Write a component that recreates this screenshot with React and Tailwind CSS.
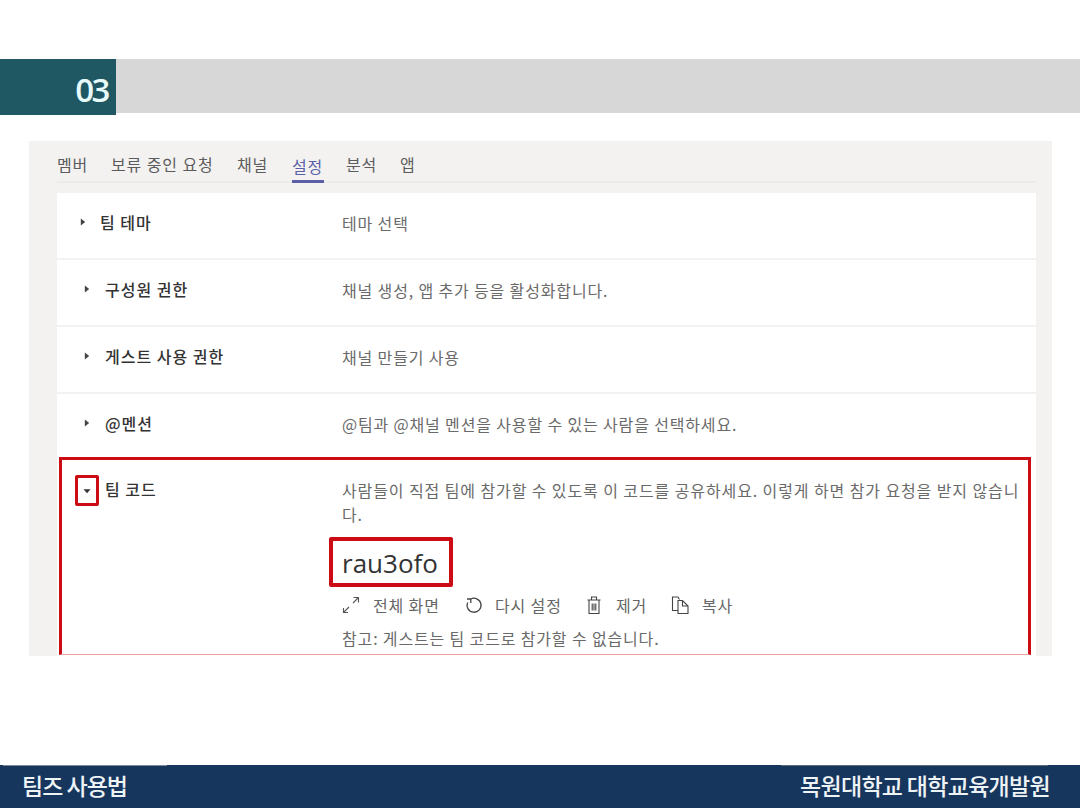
import React from "react";

function Caret({ down, className = "" }) {
  return (
    <svg width="8" height="8" viewBox="0 0 8 8" className={className}>
      {down ? <path d="M0.5 2.2h7L4 6.2z" fill="#333" /> : <path d="M1.8 0.6l4.4 3.4-4.4 3.4z" fill="#444" />}
    </svg>
  );
}

function Row({ title, desc, first }) {
  return (
    <div className="h-[65px] bg-white mb-[2px] flex items-start pt-[18px]">
      <div className={`w-[285px] flex items-center shrink-0 ${first ? "pl-[22px]" : "pl-[26px]"}`}>
        <Caret />
        <span className={`text-[16px] leading-[22px] font-medium tracking-[1px] text-[#333] ${first ? "ml-[13px]" : "ml-[14px]"}`}>{title}</span>
      </div>
      <div className="text-[16px] tracking-[0.85px] leading-[24px] text-[#6a6a6a]">{desc}</div>
    </div>
  );
}

function Expand() {
  return (
    <svg width="18" height="18" viewBox="0 0 18 18" fill="none" stroke="#555" strokeWidth="1.1">
      <path d="M1.5 16.5L7 11M1.5 12V16.5H6M11.5 1.5h5V6.5M16.5 1.5L11 7" />
    </svg>
  );
}
function Reset() {
  return (
    <svg width="18" height="18" viewBox="0 0 18 18" fill="none" stroke="#444" strokeWidth="1.3">
      <path d="M5.5 3.2A7 7 0 1 1 2.6 6.5M5.8 7V3H2" />
    </svg>
  );
}
function Trash() {
  return (
    <svg width="16" height="20" viewBox="0 0 16 20" fill="none" stroke="#444" strokeWidth="1.1">
      <path d="M1.5 5h13M5.5 5V2h5v3M3 5V18.5h10V5M6.2 8.5v7M8 8.5v7M9.8 8.5v7" />
    </svg>
  );
}
function Copy() {
  return (
    <svg width="18" height="20" viewBox="0 0 18 20" fill="none" stroke="#444" strokeWidth="1.1">
      <path d="M7 15.5H1.5V2H7l1.5 2.5M7 5.5h4.5L17 11v7.5H7zM11.5 5.5V11H17" />
    </svg>
  );
}

function Action({ icon, label, gap, width }) {
  return (
    <div className={`flex items-center ${gap} ${width}`}>
      {icon}
      <span className="text-[16px] tracking-[0.85px] text-[#666]">{label}</span>
    </div>
  );
}

const tab = "h-[40px] pt-[11px] leading-[24px] tracking-[0.9px] whitespace-nowrap";

export default function App() {
  return (
    <div className="w-[1080px] h-[810px] bg-white flex flex-col overflow-hidden" style={{ fontFamily: '"Noto Sans CJK KR", "Noto Sans", sans-serif' }}>
      <div className="h-[59px] shrink-0" />
      <div className="h-[56px] shrink-0 flex items-start">
        <div className="w-[116px] h-[56px] bg-[#1f5763] flex items-center justify-end pr-[8px] pt-[5px]">
          <span className="text-[33px] font-semibold leading-none tracking-[-2.5px] text-[#e8fbfb]" style={{ fontFamily: '"Open Sans", sans-serif' }}>03</span>
        </div>
        <div className="flex-1 h-[54px] bg-[#d7d7d7]" />
      </div>
      <div className="h-[26px] shrink-0" />
      <div className="ml-[29px] w-[1023px] h-[515px] shrink-0 bg-[#f3f2f1] overflow-hidden pl-[28px] pr-[16px]">
        <div className="h-[42px] flex items-end border-b-2 border-[#ebebeb] text-[#5c5c5c] text-[16px]">
          <span className={`${tab} w-[54px]`}>멤버</span>
          <span className={`${tab} w-[126px]`}>보류 중인 요청</span>
          <span className={`${tab} w-[55px]`}>채널</span>
          <span className={`${tab} w-[32px] text-[#5b5fa8] border-b-[3px] border-[#5b5fa8] -mb-[2px]`}>설정</span>
          <span className={`${tab} w-[54px] ml-[22px]`}>분석</span>
          <span className={tab}>앱</span>
        </div>
        <div className="h-[10px]" />
        <Row first title="팀 테마" desc="테마 선택" />
        <Row title="구성원 권한" desc="채널 생성, 앱 추가 등을 활성화합니다." />
        <Row title="게스트 사용 권한" desc="채널 만들기 사용" />
        <Row title="@멘션" desc="@팀과 @채널 멘션을 사용할 수 있는 사람을 선택하세요." />
        <div className="bg-white h-[260px] -mt-[4px] pl-[2px] pr-[5px]">
          <div className="h-[198px] border-[3px] border-b-[1px] border-[#cc0c14] border-b-[#e8a0a0] flex overflow-hidden">
            <div className="w-[280px] shrink-0 flex items-start pl-[13px] pt-[15px]">
              <div className="w-[24px] h-[31px] border-[3px] border-[#cc0c14] rounded-[2px] flex items-center justify-center">
                <Caret down />
              </div>
              <span className="ml-[6px] mt-[3px] text-[16px] tracking-[1px] leading-[22px] font-medium text-[#333]">팀 코드</span>
            </div>
            <div className="flex-1 pt-[18px]">
              <div className="text-[16px] tracking-[0.9px] leading-[24px] text-[#6a6a6a] w-[684px] h-[48px]">
                사람들이 직접 팀에 참가할 수 있도록 이 코드를 공유하세요. 이렇게 하면 참가 요청을 받지 않습니다.
              </div>
              <div className="ml-[-13px] mt-[11px] w-[124px] h-[50px] border-[4px] border-[#cc0c14] rounded-[2px] flex items-center pl-[9px] pt-[2px]">
                <span className="text-[26px] font-medium leading-none text-[#333]" style={{ fontFamily: '"Open Sans", sans-serif' }}>rau3ofo</span>
              </div>
              <div className="flex items-center h-[24px] mt-[6px]">
                <Action icon={<Expand />} label="전체 화면" gap="gap-[13px]" width="w-[123px]" />
                <Action icon={<Reset />} label="다시 설정" gap="gap-[12px]" width="w-[121px]" />
                <Action icon={<Trash />} label="제거" gap="gap-[14px]" width="w-[85px]" />
                <Action icon={<Copy />} label="복사" gap="gap-[13px]" width="" />
              </div>
              <div className="text-[16px] tracking-[0.85px] leading-[24px] text-[#6a6a6a] mt-[9px]">참고: 게스트는 팀 코드로 참가할 수 없습니다.</div>
            </div>
          </div>
        </div>
      </div>
      <div className="h-[109px] shrink-0" />
      <div className="h-[43px] shrink-0 bg-[#17365d] flex flex-col text-[#eef3f6] font-medium">
        <div className="h-[1px] flex justify-between pl-[3px] pr-[32px]">
          <div className="w-[164px] bg-[#7d8a99]" />
          <div className="w-[267px] bg-[#5d6a78]" />
        </div>
        <div className="flex-1 flex items-center justify-between pl-[22px] pr-[30px] pb-[3px]">
          <span className="text-[23px] tracking-[-1px]">팀즈 사용법</span>
          <span className="text-[23px] tracking-[-0.7px]">목원대학교 대학교육개발원</span>
        </div>
      </div>
    </div>
  );
}
